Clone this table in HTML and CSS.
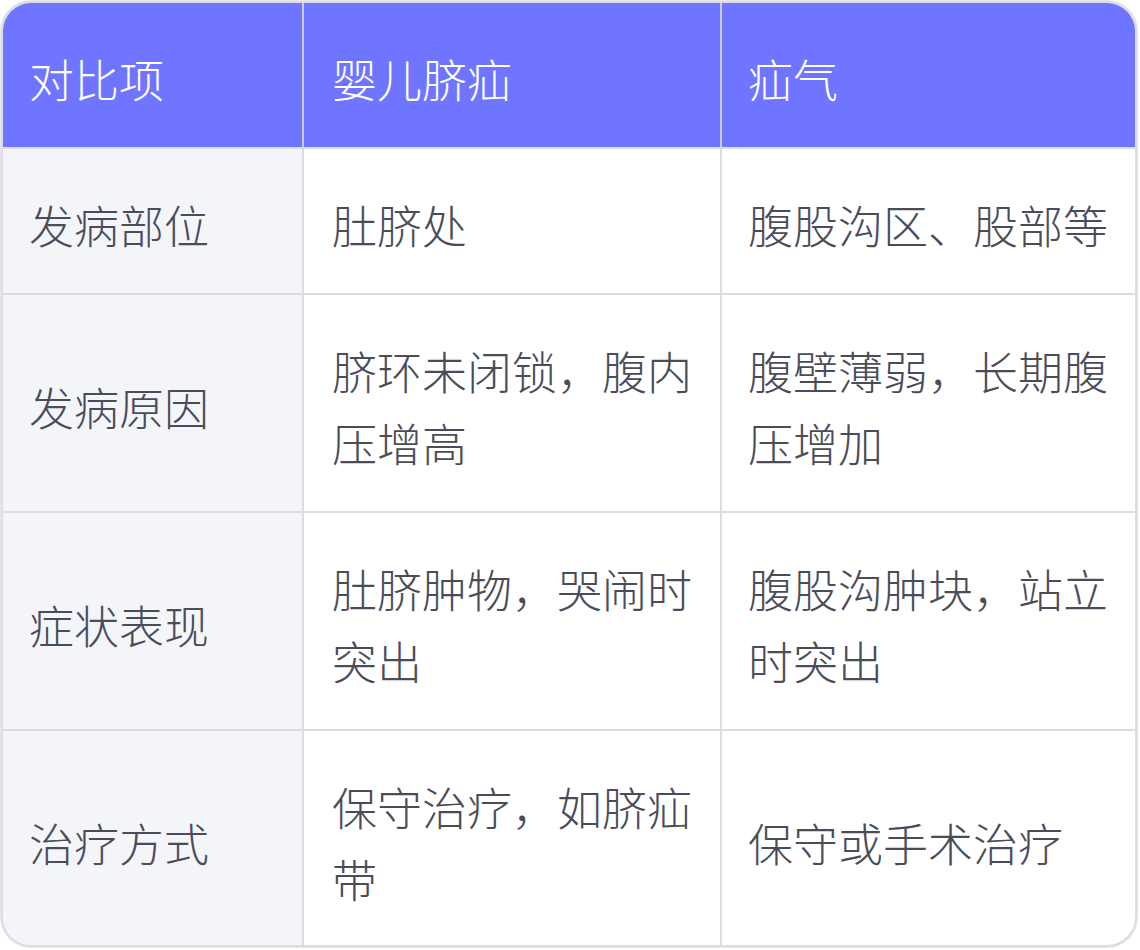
FILE: index.html
```html
<!DOCTYPE html>
<html lang="zh-CN">
<head>
<meta charset="utf-8">
<title>婴儿脐疝与疝气对比</title>
<link rel="stylesheet" href="styles.css">
</head>
<body>
<div class="card">
  <table class="compare">
    <colgroup>
      <col class="c1">
      <col class="c2">
      <col class="c3">
    </colgroup>
    <thead>
      <tr>
        <th>对比项</th>
        <th>婴儿脐疝</th>
        <th>疝气</th>
      </tr>
    </thead>
    <tbody>
      <tr>
        <td class="label">发病部位</td>
        <td>肚脐处</td>
        <td>腹股沟区、股部等</td>
      </tr>
      <tr>
        <td class="label">发病原因</td>
        <td>脐环未闭锁，腹内压增高</td>
        <td>腹壁薄弱，长期腹压增加</td>
      </tr>
      <tr>
        <td class="label">症状表现</td>
        <td>肚脐肿物，哭闹时突出</td>
        <td>腹股沟肿块，站立时突出</td>
      </tr>
      <tr>
        <td class="label">治疗方式</td>
        <td>保守治疗，如脐疝带</td>
        <td>保守或手术治疗</td>
      </tr>
    </tbody>
  </table>
</div>
</body>
</html>
```
FILE: styles.css
```css
html, body {
  margin: 0;
  padding: 0;
  background: #ffffff;
}

.card {
  width: 1136px;
  height: 946px;
  margin: 1px;
  border: 2px solid #dcdde2;
  box-shadow: 0 0 0 1px #e8e8ec;
  border-radius: 30px;
  overflow: hidden;
  box-sizing: border-box;
  background: #ffffff;
}

.compare {
  width: 100%;
  border-collapse: separate;
  border-spacing: 0;
  table-layout: fixed;
  font-family: "Noto Sans CJK SC", "Noto Sans", sans-serif;
  font-size: 45px;
  font-weight: 300;
  line-height: 72px;
  color: #4a4d59;
}

.c1 { width: 301px; }
.c2 { width: 418px; }
.c3 { width: 415px; }

.compare th,
.compare td {
  padding: 40px 22px 32px 28px;
  text-align: left;
  vertical-align: middle;
  font-weight: 300;
  border-right: 2px solid #dcdde2;
  border-bottom: 2px solid #dcdde2;
}

.compare th:first-child,
.compare td:first-child {
  padding-left: 26px;
}

.compare th:last-child,
.compare td:last-child {
  padding-left: 26px;
  border-right: none;
}

.compare tbody tr:last-child td {
  border-bottom: none;
}

.compare th {
  background: #6f75ff;
  color: #ffffff;
  border-right-color: #c9cbf3;
}

.compare td.label {
  background: #f4f5f9;
}
```
